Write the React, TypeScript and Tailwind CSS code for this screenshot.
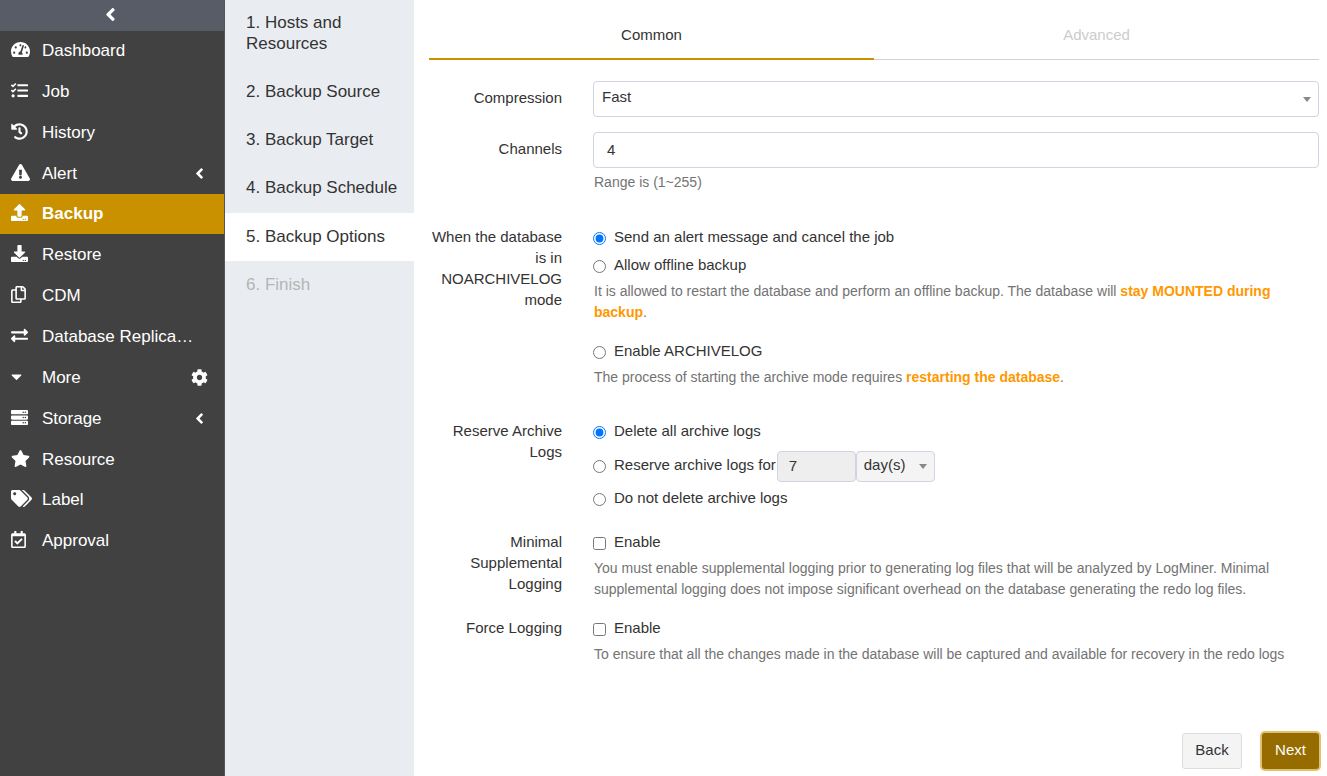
import type { ReactNode } from "react";
import type { IconType } from "react-icons";
import {
  FaAngleLeft,
  FaCaretDown,
  FaCog,
  FaDownload,
  FaExchangeAlt,
  FaExclamationTriangle,
  FaHistory,
  FaRegCalendarCheck,
  FaRegCopy,
  FaServer,
  FaStar,
  FaTachometerAlt,
  FaTags,
  FaTasks,
  FaUpload,
} from "react-icons/fa";

type NavItem = { label: string; icon: IconType; width: string; tail?: IconType; state?: "active" | "tight" };

const nav: NavItem[] = [
  { label: "Dashboard", icon: FaTachometerAlt, width: "w-[19px]" },
  { label: "Job", icon: FaTasks, width: "w-[17px]" },
  { label: "History", icon: FaHistory, width: "w-[17px]" },
  { label: "Alert", icon: FaExclamationTriangle, width: "w-[19px]", tail: FaAngleLeft },
  { label: "Backup", icon: FaUpload, width: "w-[17px]", state: "active" },
  { label: "Restore", icon: FaDownload, width: "w-[17px]" },
  { label: "CDM", icon: FaRegCopy, width: "w-[15px]" },
  { label: "Database Replica…", icon: FaExchangeAlt, width: "w-[17px]" },
  { label: "More", icon: FaCaretDown, width: "w-[11px]", tail: FaCog },
  { label: "Storage", icon: FaServer, width: "w-[17px]", tail: FaAngleLeft },
  { label: "Resource", icon: FaStar, width: "w-[19px]", state: "tight" },
  { label: "Label", icon: FaTags, width: "w-[21px]" },
  { label: "Approval", icon: FaRegCalendarCheck, width: "w-[15px]" },
];

function Sidebar() {
  return (
    <aside className="flex w-[225px] shrink-0 flex-col border-r border-[#555] bg-[#414141] text-white">
      <button aria-label="Collapse menu" className="flex h-[30px] items-center justify-center bg-[#585c67] pr-1 pb-[2px]">
        <FaAngleLeft size={21} />
      </button>
      <nav className="border-t border-[#585c67]">
        {nav.map(({ label, icon: Icon, width, tail: Tail, state }) => (
          <a
            key={label}
            href="#"
            className={
              "flex items-center pb-[2px] pl-[11px] text-[17px] " +
              (state === "active"
                ? "-mt-px mb-px h-[40px] bg-[#c99000] font-bold"
                : state === "tight"
                  ? "h-[40px]"
                  : "h-[41px]")
            }
          >
            <span className="flex w-[31px] shrink-0 items-center pb-[2px]">
              <Icon className={"h-[17px] " + width} />
            </span>
            <span className="w-[151px] whitespace-nowrap">{label}</span>
            {Tail && (
              <span className="flex w-3 items-center justify-center">
                <Tail size={17} className="shrink-0" />
              </span>
            )}
          </a>
        ))}
      </nav>
    </aside>
  );
}

const steps = ["Hosts and Resources", "Backup Source", "Backup Target", "Backup Schedule", "Backup Options", "Finish"];

function Steps() {
  return (
    <ol className="w-[189px] shrink-0 bg-[#e9edf2] text-[17px] leading-[21px] text-[#333]">
      {steps.map((s, i) => (
        <li
          key={s}
          aria-current={i === 4 ? "step" : undefined}
          className={
            "pr-4 pl-[21px] " +
            (i === 0
              ? "pt-3 pb-[13px]"
              : i === 3
                ? "pt-[14px] pb-[15px]"
                : i === 4
                  ? "bg-white pt-[13px] pb-[14px]"
                  : i === 5
                    ? "pt-[13px] text-[#b5b5b5]"
                    : "pt-[14px] pb-[13px]")
          }
        >
          {`${i + 1}. ${s}`}
        </li>
      ))}
    </ol>
  );
}

function Row({ label, htmlFor, className, children }: { label: string; htmlFor?: string; className?: string; children: ReactNode }) {
  return (
    <div className={"flex " + (className ?? "")} role={htmlFor ? undefined : "group"} aria-label={htmlFor ? undefined : label}>
      {htmlFor ? (
        <label htmlFor={htmlFor} className="w-[133px] shrink-0 pt-[6px] text-right">
          {label}
        </label>
      ) : (
        <span className="w-[133px] shrink-0 text-right">{label}</span>
      )}
      <div className="ml-[31px] min-w-0 flex-1">{children}</div>
    </div>
  );
}

function Option({ type, name, label, checked }: { type: "radio" | "checkbox"; name: string; label: string; checked?: boolean }) {
  return (
    <label className="flex w-fit items-center gap-2">
      <input type={type} name={name} defaultChecked={checked} className="mt-[3px] h-[13px] w-[13px]" />
      {label}
    </label>
  );
}

function Caret({ className }: { className: string }) {
  return (
    <svg viewBox="0 0 8 5" className={"pointer-events-none absolute h-[5px] w-2 " + className} fill="#888">
      <path d="M0 0h8L4 5z" />
    </svg>
  );
}

function Help({ children }: { children: ReactNode }) {
  return <p className="mt-[6px] pl-px text-[14px] text-[#737373]">{children}</p>;
}

export default function App() {
  return (
    <div className="flex min-h-screen bg-white font-['Liberation_Sans',Arial,sans-serif] text-[15px] leading-[21px] text-[#333]">
      <Sidebar />
      <Steps />
      <main className="flex min-w-0 flex-1 flex-col pr-2 pl-[15px]">
        <div role="tablist" className="flex">
          <button
            role="tab"
            aria-selected="true"
            className="flex h-[60px] flex-1 items-center justify-center border-b-2 border-[#c99000] pt-[11px]"
          >
            Common
          </button>
          <button
            role="tab"
            aria-selected="false"
            className="flex h-[60px] flex-1 items-center justify-center border-b border-[#d2d2d2] pt-[10px] text-[#ccc]"
          >
            Advanced
          </button>
        </div>

        <form className="mt-[21px]">
          <Row label="Compression" htmlFor="compression">
            <div className="relative">
              <select id="compression" className="h-9 w-full appearance-none rounded border border-[#d2d3e0] bg-white pb-[5px] pl-2">
                <option>Fast</option>
              </select>
              <Caret className="top-4 right-2" />
            </div>
          </Row>
          <Row label="Channels" htmlFor="channels" className="mt-[15px]">
            <input id="channels" defaultValue="4" className="h-9 w-full rounded border border-[#d2d3e0] px-[13px] pb-[2px]" />
            <p className="mt-1 pl-px text-[14px] text-[#737373]">Range is (1~255)</p>
          </Row>

          <Row label="When the database is in NOARCHIVELOG mode" className="mt-[33px]">
            <Option type="radio" name="mode" label="Send an alert message and cancel the job" checked />
            <div className="mt-[7px]">
              <Option type="radio" name="mode" label="Allow offline backup" />
            </div>
            <Help>
              It is allowed to restart the database and perform an offline backup. The database will{" "}
              <strong className="text-[#ff9800]">stay MOUNTED during backup</strong>.
            </Help>
            <div className="mt-[17px]">
              <Option type="radio" name="mode" label="Enable ARCHIVELOG" />
            </div>
            <Help>
              The process of starting the archive mode requires{" "}
              <strong className="text-[#ff9800]">restarting the database</strong>.
            </Help>
          </Row>

          <Row label="Reserve Archive Logs" className="mt-8">
            <Option type="radio" name="reserve" label="Delete all archive logs" checked />
            <div className="mt-[10px] flex">
              <div className="mt-[3px]">
                <Option type="radio" name="reserve" label="Reserve archive logs for" />
              </div>
              <input
                aria-label="Number to keep"
                defaultValue="7"
                disabled
                className="ml-px h-[31px] w-[79px] rounded border border-[#d2d3e0] bg-[#eee] px-[11px] pb-[3px]"
              />
              <div className="relative">
                <select
                  aria-label="Unit"
                  disabled
                  className="h-[31px] w-[79px] appearance-none rounded border border-[#d2d3e0] bg-[#f4f4f4] pb-[5px] pl-[7px] opacity-100"
                >
                  <option>day(s)</option>
                </select>
                <Caret className="top-[13px] right-2" />
              </div>
            </div>
            <div className="mt-[5px]">
              <Option type="radio" name="reserve" label="Do not delete archive logs" />
            </div>
          </Row>

          <Row label="Minimal Supplemental Logging" className="mt-[23px]">
            <Option type="checkbox" name="supplemental" label="Enable" />
            <Help>
              You must enable supplemental logging prior to generating log files that will be analyzed by LogMiner. Minimal
              supplemental logging does not impose significant overhead on the database generating the redo log files.
            </Help>
          </Row>

          <Row label="Force Logging" className="mt-[17px]">
            <Option type="checkbox" name="force" label="Enable" />
            <Help>To ensure that all the changes made in the database will be captured and available for recovery in the redo logs</Help>
          </Row>
        </form>

        <div className="mt-auto flex justify-end gap-5 pb-[7px]">
          <button className="h-9 w-15 rounded-[3px] border border-[#ddd] bg-[#f4f4f4] pb-1">Back</button>
          <button className="h-9 w-[57px] rounded-[3px] bg-[#966b00] pb-1 text-white ring-2 ring-[#e2c070]">Next</button>
        </div>
      </main>
    </div>
  );
}
